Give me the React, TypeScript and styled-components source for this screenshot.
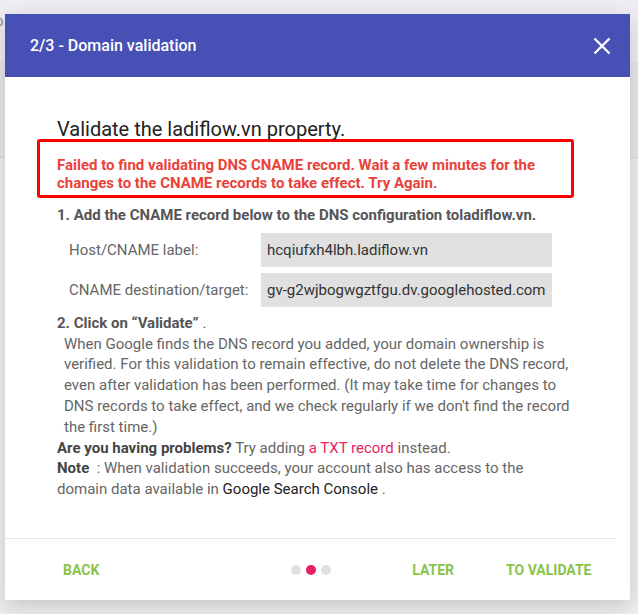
import React from "react";
import styled, { createGlobalStyle } from "styled-components";

const Global = createGlobalStyle`
  html, body { margin: 0; padding: 0; }
  body {
    font-family: Roboto, "Liberation Sans", Arial, sans-serif;
    background: #ebebee;
    width: 638px;
    height: 614px;
    overflow: hidden;
  }
  * { box-sizing: border-box; }
`;

const Page = styled.div`
  position: relative;
  width: 638px;
  height: 614px;
  overflow: hidden;
  background: #efeff1;
`;

const TopBar = styled.div`
  height: 62px;
  background: #eeeef4;
  display: flex;
  align-items: flex-start;
  padding-top: 12px;
`;

const Clipped = styled.span`
  margin-left: -5px;
  font-size: 15px;
  color: #8a8a8a;
`;

const Band = styled.div`
  height: 96px;
  background: #e8e8ea;
  border-bottom: 1px solid #d6d6d8;
`;

const Dialog = styled.div`
  position: absolute;
  left: 5px;
  top: 14px;
  width: 625px;
  height: 586px;
  background: #fff;
  display: flex;
  flex-direction: column;
  box-shadow: 0 6px 22px rgba(0, 0, 0, 0.18);
`;

const Header = styled.div`
  height: 63px;
  flex: 0 0 63px;
  background: #4750b5;
  color: #fff;
  display: flex;
  align-items: center;
  justify-content: space-between;
  padding: 0 18px 0 25px;
`;

const HeaderTitle = styled.h2`
  margin: 0;
  font-size: 16px;
  font-weight: 500;
`;

const CloseButton = styled.button`
  background: none;
  border: 0;
  padding: 0;
  width: 20px;
  height: 20px;
  display: flex;
  align-items: center;
  justify-content: center;
  cursor: pointer;
`;

const Body = styled.div`
  flex: 1;
  padding: 39px 56px 0 52px;
`;

const Title = styled.h3`
  margin: 0;
  font-size: 20px;
  line-height: 26px;
  font-weight: 400;
  color: #222;
`;

const ErrorBox = styled.div`
  margin: -3px 0 0 -20px;
  border: 3px solid #ff0000;
  border-radius: 3px;
  padding: 14px 10px 3px 17px;
  font-size: 15px;
  font-weight: 700;
  line-height: 18px;
  color: #e8433a;
`;

const StepTitle = styled.div<{ $mt: number }>`
  margin-top: ${(p) => p.$mt}px;
  font-size: 15px;
  font-weight: 700;
  line-height: 20.8px;
  color: #555;
`;

const RecordGrid = styled.div`
  margin-top: 7px;
  display: grid;
  grid-template-columns: 204px 291px;
  row-gap: 6px;
`;

const RecordLabel = styled.div`
  padding-left: 12px;
  display: flex;
  align-items: center;
  font-size: 15px;
  color: #666;
`;

const RecordValue = styled.div`
  height: 34px;
  background: #e0e0e0;
  padding: 0 6px;
  display: flex;
  align-items: center;
  font-size: 15px;
  color: #333;
  white-space: nowrap;
`;

const Paragraph = styled.p<{ $indent?: boolean }>`
  margin: 0;
  padding-left: ${(p) => (p.$indent ? 7 : 0)}px;
  font-size: 15px;
  line-height: 20.8px;
  color: #666;
`;

const Strong = styled.strong`
  font-weight: 700;
  color: #444;
`;

const Plain = styled.span`
  font-weight: 400;
`;

const Link = styled.a`
  color: #e91e63;
  text-decoration: none;
`;

const Dark = styled.span`
  color: #222;
`;

const Footer = styled.div`
  height: 62px;
  flex: 0 0 62px;
  margin-right: 14px;
  border-top: 1px solid #e8e8e8;
  display: flex;
  align-items: center;
  padding-left: 58px;
`;

const FooterButton = styled.button<{ $ml?: number }>`
  margin-left: ${(p) => p.$ml ?? 0}px;
  background: none;
  border: 0;
  padding: 0;
  font-family: inherit;
  font-size: 14px;
  font-weight: 700;
  text-transform: uppercase;
  color: #8bc34a;
  cursor: pointer;
`;

const Dots = styled.div<{ $ml: number }>`
  margin-left: ${(p) => p.$ml}px;
  display: flex;
  gap: 5px;
`;

const Dot = styled.span<{ $active?: boolean }>`
  width: 10px;
  height: 10px;
  border-radius: 50%;
  background: ${(p) => (p.$active ? "#e91e63" : "#e0e0e0")};
`;

export default function App() {
  return (
    <>
      <Global />
      <Page>
        <TopBar>
          <Clipped>o</Clipped>
        </TopBar>
        <Band />
        <Dialog>
          <Header>
            <HeaderTitle>2/3 - Domain validation</HeaderTitle>
            <CloseButton aria-label="close">
              <svg width="18" height="18" viewBox="0 0 18 18">
                <path d="M1.5 1.5 L16.5 16.5 M16.5 1.5 L1.5 16.5" stroke="#fff" strokeWidth="2.4" strokeLinecap="butt" />
              </svg>
            </CloseButton>
          </Header>
          <Body>
            <Title>Validate the ladiflow.vn property.</Title>
            <ErrorBox>
              Failed to find validating DNS CNAME record. Wait a few minutes for the changes to the CNAME records to take
              effect. Try Again.
            </ErrorBox>
            <StepTitle $mt={7}>1. Add the CNAME record below to the DNS configuration toladiflow.vn.</StepTitle>
            <RecordGrid>
              <RecordLabel>Host/CNAME label:</RecordLabel>
              <RecordValue>hcqiufxh4lbh.ladiflow.vn</RecordValue>
              <RecordLabel>CNAME destination/target:</RecordLabel>
              <RecordValue>gv-g2wjbogwgztfgu.dv.googlehosted.com</RecordValue>
            </RecordGrid>
            <StepTitle $mt={6}>
              2. Click on “Validate” <Plain>.</Plain>
            </StepTitle>
            <Paragraph $indent>
              When Google finds the DNS record you added, your domain ownership is verified. For this validation to
              remain effective, do not delete the DNS record, even after validation has been performed. (It may take
              time for changes to DNS records to take effect, and we check regularly if we don't find the record the
              first time.)
            </Paragraph>
            <Paragraph>
              <Strong>Are you having problems?</Strong> Try adding <Link href="#">a TXT record</Link> instead.
            </Paragraph>
            <Paragraph>
              <Strong>Note</Strong> &nbsp;: When validation succeeds, your account also has access to the domain data
              available in <Dark>Google Search Console</Dark> .
            </Paragraph>
          </Body>
          <Footer>
            <FooterButton>Back</FooterButton>
            <Dots $ml={192}>
              <Dot />
              <Dot $active />
              <Dot />
            </Dots>
            <FooterButton $ml={81}>Later</FooterButton>
            <FooterButton $ml={52}>To validate</FooterButton>
          </Footer>
        </Dialog>
      </Page>
    </>
  );
}
